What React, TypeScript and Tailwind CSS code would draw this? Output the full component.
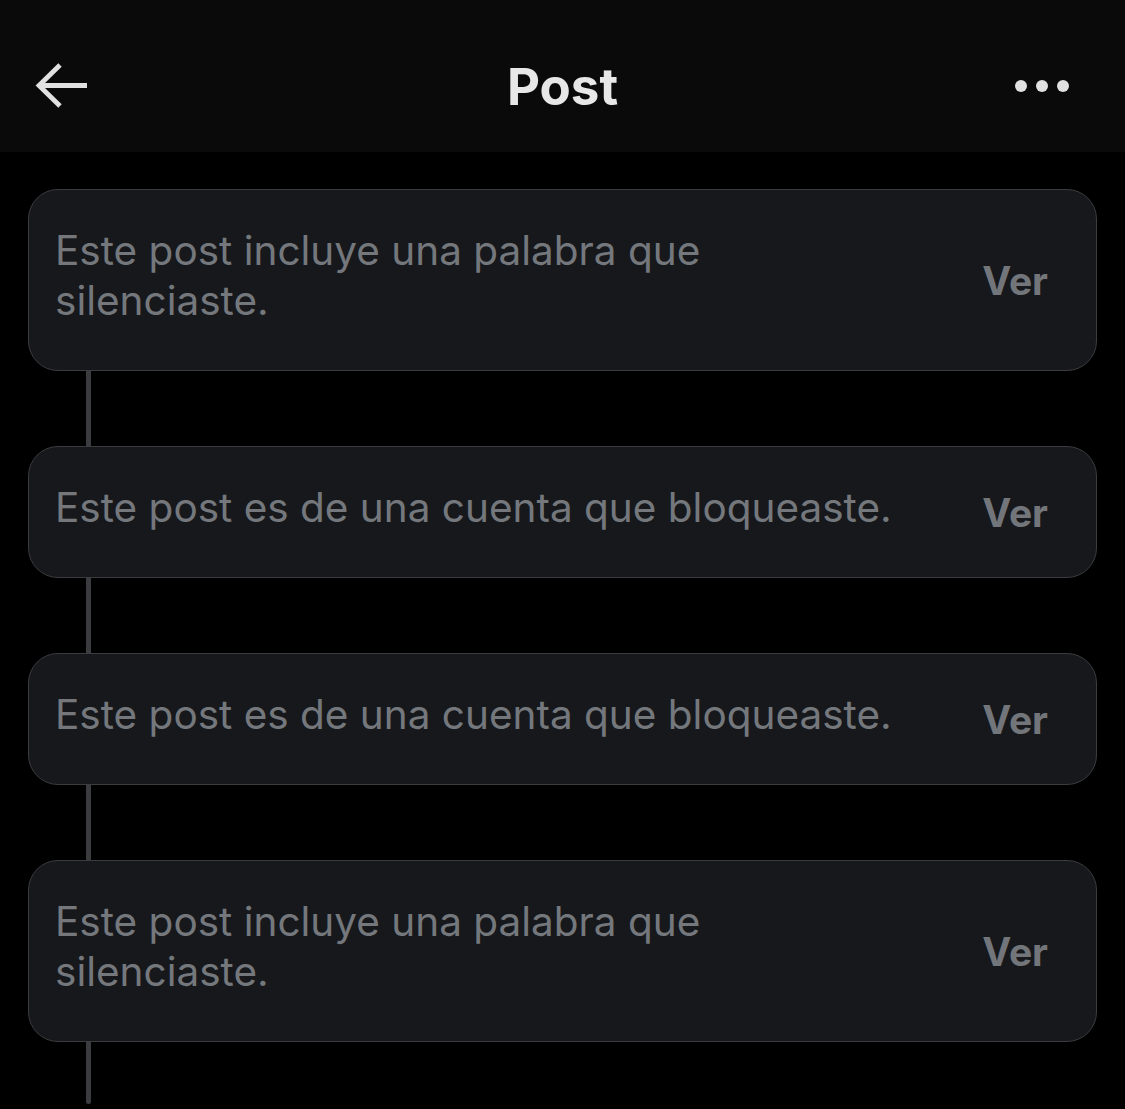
import React from 'react';

type Item = { text: string[] };

const items: Item[] = [
  { text: ['Este post incluye una palabra que', 'silenciaste.'] },
  { text: ['Este post es de una cuenta que bloqueaste.'] },
  { text: ['Este post es de una cuenta que bloqueaste.'] },
  { text: ['Este post incluye una palabra que', 'silenciaste.'] },
];

const Thread: React.FC<{ last?: boolean }> = ({ last }) =>
  last ? (
    <div className="ml-[58px] w-[5px] h-[62px] rounded-b-full bg-[#3a3c40]" />
  ) : (
    <div className="ml-[58px] w-[5px] h-[75px] bg-[#3a3c40]" />
  );

const HiddenPost: React.FC<{ item: Item }> = ({ item }) => (
  <div className="flex items-center justify-between rounded-[30px] border border-[#3b3c40] bg-[#17181c] pl-[26px] pr-[48px] py-[40px]">
    <div className="text-[40.5px] leading-[50px] text-[#74787d] -translate-y-[4px]">
      {item.text.map((t, i) => (
        <div key={i}>{t}</div>
      ))}
    </div>
    <span className="text-[39px] leading-none font-bold text-[#72767b]">Ver</span>
  </div>
);

export default function App() {
  return (
    <div className="min-h-[1109px] w-[1125px] bg-black overflow-hidden" style={{ fontFamily: 'Inter, "Noto Sans", sans-serif' }}>
      <header className="h-[152px] bg-[#0a0a0a] grid grid-cols-[1fr_auto_1fr] items-center px-[35px] pt-[20px]">
        <svg width="54" height="46" viewBox="0 0 54 46" fill="none" stroke="#e1e1e1" strokeWidth="4.8">
          <path d="M52 22.5H4" />
          <path d="M25 2L4 22.5L25 43" />
        </svg>
        <h1 className="text-[51px] leading-none font-bold text-[#e7e7e7]">Post</h1>
        <div className="flex gap-[9px] mr-[21px] justify-self-end">
          <span className="w-[12px] h-[12px] rounded-full bg-[#e1e1e1]" />
          <span className="w-[12px] h-[12px] rounded-full bg-[#e1e1e1]" />
          <span className="w-[12px] h-[12px] rounded-full bg-[#e1e1e1]" />
        </div>
      </header>
      <main className="pt-[37px] px-[28px]">
        {items.map((item, i) => (
          <React.Fragment key={i}>
            <HiddenPost item={item} />
            <Thread last={i === items.length - 1} />
          </React.Fragment>
        ))}
      </main>
    </div>
  );
}
